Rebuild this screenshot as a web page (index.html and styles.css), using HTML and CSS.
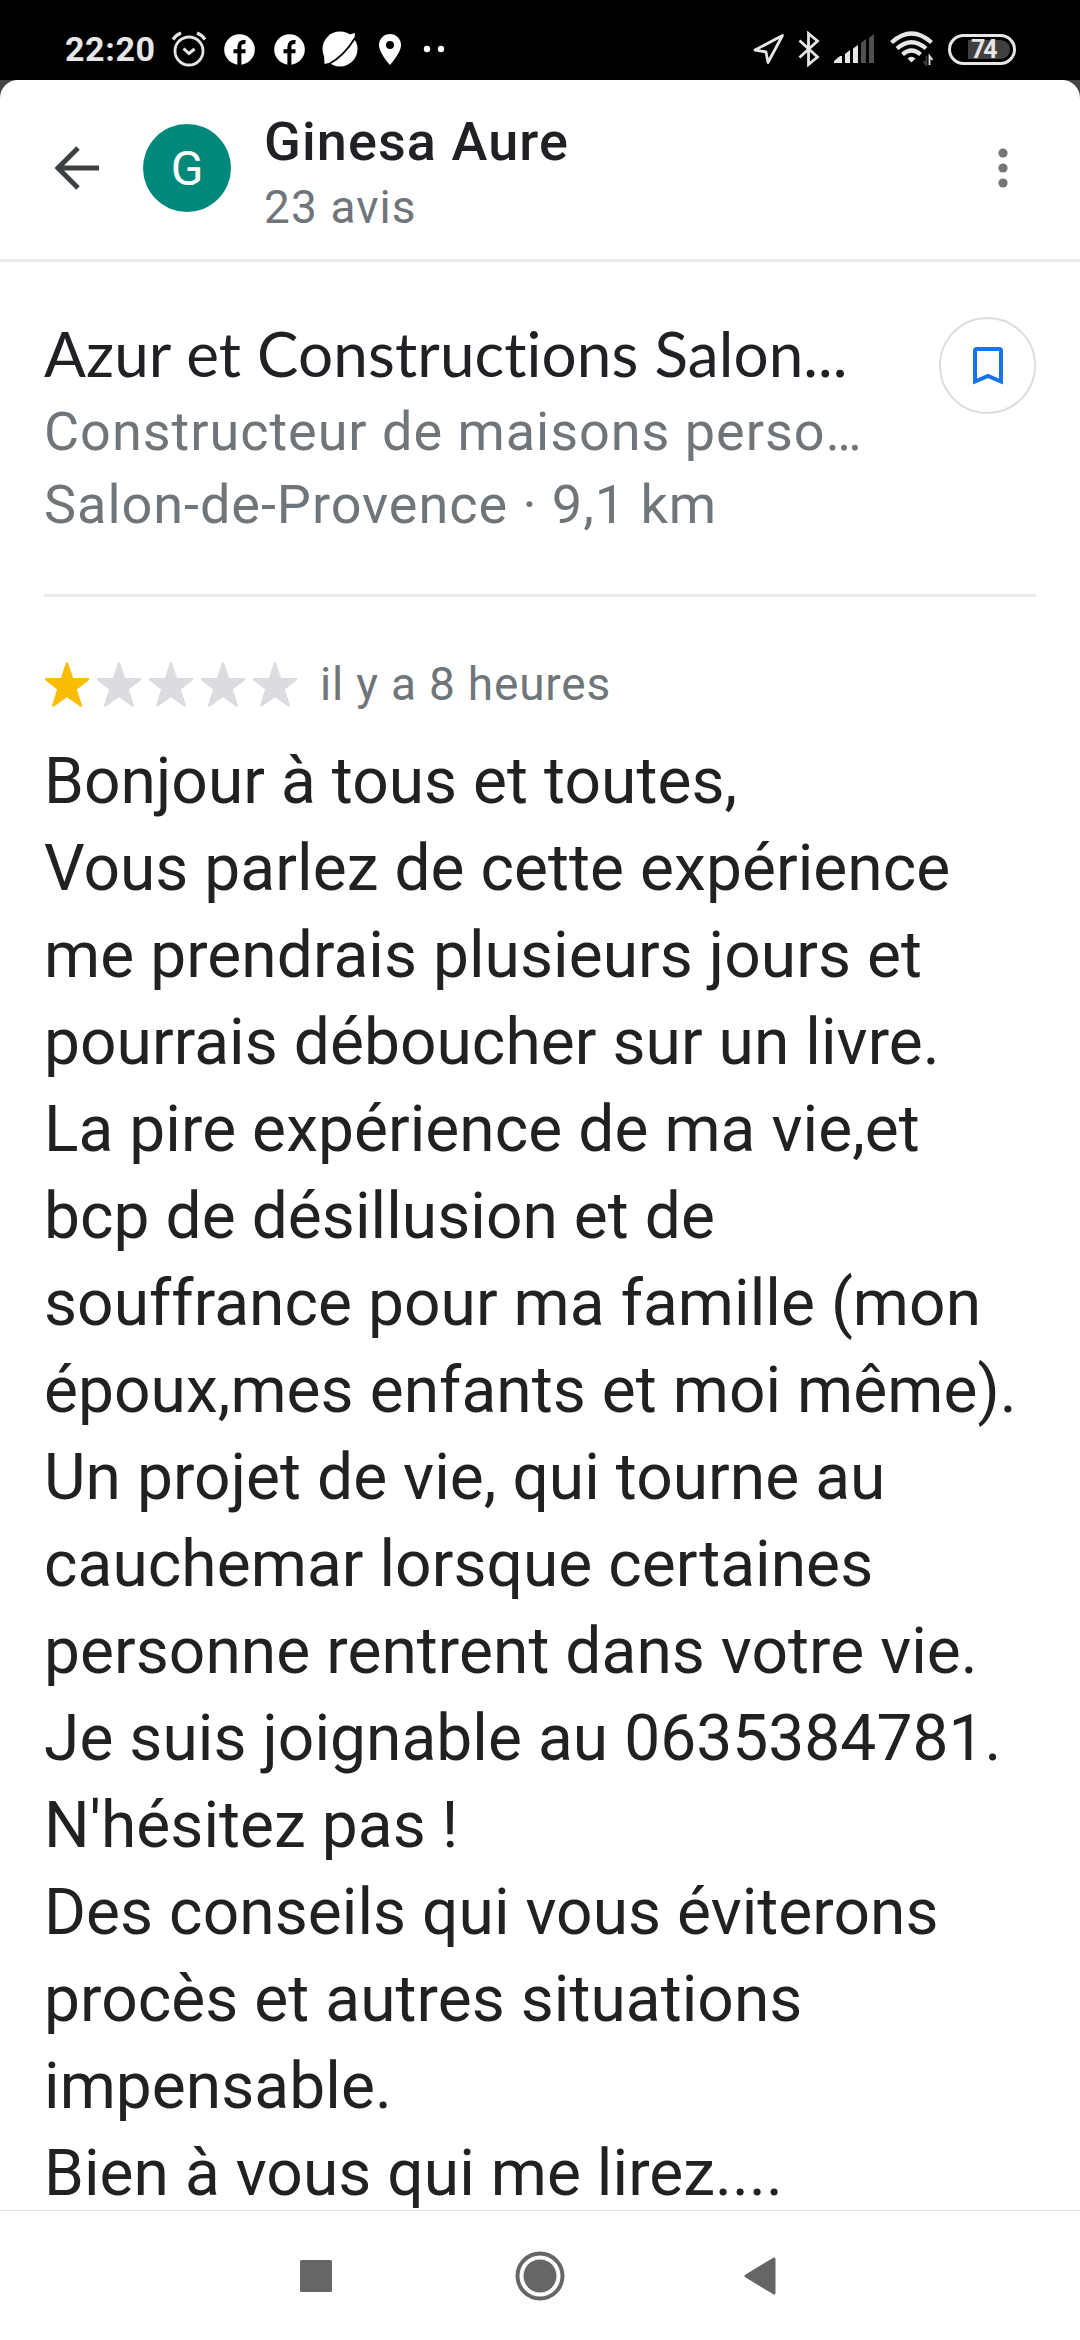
FILE: index.html
```html
<!DOCTYPE html>
<html lang="fr">
<head>
<meta charset="utf-8">
<title>Avis de Ginesa Aure</title>
<link rel="stylesheet" href="styles.css">
</head>
<body>
<div class="status">
  <span class="clock">22:20</span>
  <svg class="ic alarm" width="36" height="36" viewBox="0 0 36 36" fill="none" stroke="#e6e6e6"><circle cx="18" cy="20" r="14" stroke-width="2.8"/><path d="M2 8.500Q5 4 10 2M34 8.500Q31 4 26 2" stroke-width="3.200"/><path d="M12.500 17.500L18 22.500L23.500 18" stroke-width="3"/></svg>
  <svg class="ic fb" width="31" height="31" viewBox="0 0 31 31"><circle cx="15.500" cy="15.500" r="15.300" fill="#fff"/><path d="M15.400 31V12.500Q15.400 7.600 21.500 8M9.500 17.300H21.500" fill="none" stroke="#000" stroke-width="4"/></svg>
  <svg class="ic fb2" width="31" height="31" viewBox="0 0 31 31"><circle cx="15.500" cy="15.500" r="15.300" fill="#fff"/><path d="M15.400 31V12.500Q15.400 7.600 21.500 8M9.500 17.300H21.500" fill="none" stroke="#000" stroke-width="4"/></svg>
  <svg class="ic planet" width="38" height="38" viewBox="0 0 38 38"><circle cx="19" cy="19" r="17.500" fill="#fff"/><path d="M27 5L34 3L33 12ZM3 26L3.500 34L12 32Z" fill="#fff"/><path d="M8 34Q23 26 34 8" fill="none" stroke="#000" stroke-width="1.800"/></svg>
  <svg class="ic pin" width="22" height="31" viewBox="0 0 22 31"><path fill="#fff" fill-rule="evenodd" d="M11 0A11 11 0 0 0 0 11C0 19 11 31 11 31S22 19 22 11A11 11 0 0 0 11 0ZM11 7A4 4 0 1 1 11 15A4 4 0 1 1 11 7Z"/></svg>
  <svg class="ic dots" width="22" height="8" viewBox="0 0 22 8" fill="#fff"><circle cx="4" cy="4" r="3.200"/><circle cx="18" cy="4" r="3.200"/></svg>
  <span class="grow"></span>
  <svg class="ic nav" width="32" height="32" viewBox="0 0 32 32"><path d="M2 17L29.500 2.500L15 29.500L13 19Z" fill="none" stroke="#e6e6e6" stroke-width="2.800" stroke-linejoin="round"/></svg>
  <svg class="ic bt" width="22" height="36" viewBox="0 0 22 36"><path d="M1.500 9.500L19.500 26L10.500 33.500V2.500L19.500 10L1.500 26.500" fill="none" stroke="#e6e6e6" stroke-width="2.800"/></svg>
  <svg class="ic signal" width="40" height="30" viewBox="0 0 40 30"><path fill="#e6e6e6" d="M0 29V27L6 22H8V29ZM11 29V20L16 16V29ZM19 29V14.500L24 11V29Z"/><path fill="#505050" d="M27 29V9L32 5V29ZM35 29V4L40 0V29Z"/></svg>
  <svg class="ic wifi" width="44" height="36" viewBox="0 0 44 36" fill="none" stroke="#e6e6e6" stroke-width="4.200"><path d="M1.500 11.500Q21.500-6.500 41.500 11.500M7 17.500Q21.500 5 36 17.500M12.500 23.500Q21.500 15.500 30.500 23.500"/><path d="M21.500 31.500L17.500 27.500Q21.500 24 25.500 27.500Z" fill="#e6e6e6" stroke="none"/><path d="M39.500 34V25L42.500 29" stroke-width="1.800"/><path d="M36.500 25V34L33.500 30" stroke="#444" stroke-width="1.500"/></svg>
  <span class="battery"><span class="level">74</span></span>
</div>
<div class="window">
<main class="sheet">
  <header class="head">
    <svg class="back" width="44" height="44" viewBox="0 0 44 44"><path d="M44 22H4M23 2L3 22L23 42" fill="none" stroke="#3c4043" stroke-width="5"/></svg>
    <span class="avatar">G</span>
    <div class="who"><div class="name">Ginesa Aure</div><div class="count">23 avis</div></div>
    <svg class="more" width="10" height="42" viewBox="0 0 10 42" fill="#757575"><circle cx="5" cy="6" r="4.600"/><circle cx="5" cy="21" r="4.600"/><circle cx="5" cy="36" r="4.600"/></svg>
  </header>
  <section class="place">
    <div class="info">
      <h1 class="title">Azur et Constructions Salon...</h1>
      <div class="sub kind">Constructeur de maisons perso…</div>
      <div class="sub where">Salon-de-Provence · 9,1 km</div>
    </div>
    <span class="save"><svg width="32" height="40" viewBox="0 0 32 40"><path d="M3 4.500Q3 3 4.500 3H27.500Q29 3 29 4.500V35.500L16 30L3 35.500Z" fill="none" stroke="#1a73e8" stroke-width="4"/></svg></span>
  </section>
  <section class="review">
    <div class="rating">
      <svg class="stars" width="256" height="46" viewBox="0 0 256 46" fill="#dadce0" stroke="#dadce0" stroke-width="2.400" stroke-linejoin="round"><defs><path id="s" d="M23 1.500L28.200 17.200H44L31.500 27L36.800 43.500L23 33.800L9.200 43.500L14.500 27L2 17.200H17.800Z"/></defs><use href="#s" fill="#fbbc04" stroke="#fbbc04"/><use href="#s" x="52"/><use href="#s" x="104"/><use href="#s" x="156"/><use href="#s" x="208"/></svg>
      <span class="ago">il y a 8 heures</span>
    </div>
    <p class="text">Bonjour à tous et toutes,<br>Vous parlez de cette expérience<br>me prendrais plusieurs jours et<br>pourrais déboucher sur un livre.<br>La pire expérience de ma vie,et<br>bcp de désillusion et de<br>souffrance pour ma famille (mon<br>époux,mes enfants et moi même).<br>Un projet de vie, qui tourne au<br>cauchemar lorsque certaines<br>personne rentrent dans votre vie.<br>Je suis joignable au 0635384781.<br>N'hésitez pas !<br>Des conseils qui vous éviterons<br>procès et autres situations<br>impensable.<br>Bien à vous qui me lirez....</p>
  </section>
</main>
</div>
<nav class="navbar">
  <svg width="32" height="32" viewBox="0 0 32 32"><rect width="32" height="32" rx="1.500" fill="#666"/></svg>
  <svg class="home" width="50" height="50" viewBox="0 0 50 50"><circle cx="25" cy="25" r="22.500" fill="none" stroke="#666" stroke-width="4"/><circle cx="25" cy="25" r="16.500" fill="#666"/></svg>
  <svg width="32" height="38" viewBox="0 0 32 38"><path d="M2 19L30 2V36Z" fill="#666" stroke="#666" stroke-width="3" stroke-linejoin="round"/></svg>
</nav>
</body>
</html>
```
FILE: styles.css
```css
* { box-sizing: border-box; }
body { margin: 0; width: 1080px; height: 2340px; display: flex; flex-direction: column; overflow: hidden; background: #fff; font-family: Roboto, "Liberation Sans", sans-serif; color: #202124; }
svg { display: block; flex: none; }
.status { flex: none; display: flex; align-items: center; height: 80px; padding: 18px 64px 0 65px; background: #000; }
.clock { width: 90px; font-size: 34px; font-weight: 700; line-height: 40px; letter-spacing: 0.6px; color: #e6e6e6; white-space: nowrap; }
.alarm { margin-left: 16px; }
.fb { margin-left: 17px; }
.fb2 { margin-left: 19px; }
.planet { margin-left: 16px; }
.pin { margin-left: 20px; }
.dots { margin-left: 22px; }
.grow { flex: 1; }
.bt { margin-left: 13px; }
.signal { margin-left: 14px; }
.wifi { margin-left: 16px; }
.battery { width: 68px; height: 31px; margin-left: 14px; padding: 3px 3px 3px 17px; border: 3px solid #e6e6e6; border-radius: 16px; }
.level { display: block; height: 19px; border-radius: 0 10px 10px 0; background: #404040; padding-left: 3px; font-size: 25px; font-weight: 700; line-height: 20px; letter-spacing: -2px; color: #e6e6e6; }
.window { flex: none; height: 2130px; background: #444; }
.sheet { height: 2130px; background: #fff; border-radius: 18px 18px 0 0; overflow: hidden; }
.head { display: flex; align-items: center; height: 182px; padding: 0 72px 4px 55px; border-bottom: 3px solid #e8eaed; }
.avatar { width: 88px; height: 88px; margin-left: 44px; border-radius: 50%; background: #00897b; color: #fff; font-size: 48px; line-height: 90px; text-align: center; }
.who { flex: 1; margin-left: 33px; padding-top: 13px; white-space: nowrap; }
.name { font-size: 54px; font-weight: 500; line-height: 66px; letter-spacing: 1.1px; }
.count { font-size: 46px; line-height: 64px; letter-spacing: 1.1px; color: #70757a; }
.place { display: flex; justify-content: space-between; height: 335px; margin: 0 44px; padding-top: 55px; border-bottom: 3px solid #e8eaed; }
.info { white-space: nowrap; }
.title { margin: 0 0 5px; font-family: Lato, sans-serif; font-size: 62px; font-weight: 400; font-variant-ligatures: none; line-height: 73px; letter-spacing: 0.1px; }
.sub { font-size: 54px; line-height: 73px; letter-spacing: 0.97px; color: #70757a; }
.save { display: flex; align-items: center; justify-content: center; width: 97px; height: 97px; border: 2px solid #dadce0; border-radius: 50%; }
.review { padding: 0 44px; }
.rating { display: flex; align-items: center; height: 141px; padding-top: 35px; }
.ago { margin: 0 0 3px 20px; font-size: 46px; line-height: 60px; letter-spacing: 0.8px; color: #70757a; white-space: nowrap; }
.text { margin: 0; font-size: 64px; line-height: 87px; letter-spacing: 0.07px; color: #212121; white-space: nowrap; }
.navbar { flex: none; display: flex; align-items: center; justify-content: space-between; height: 130px; padding: 0 304px 0 300px; border-top: 1px solid #e0e0e0; }
.home { margin-left: 4px; }
```
